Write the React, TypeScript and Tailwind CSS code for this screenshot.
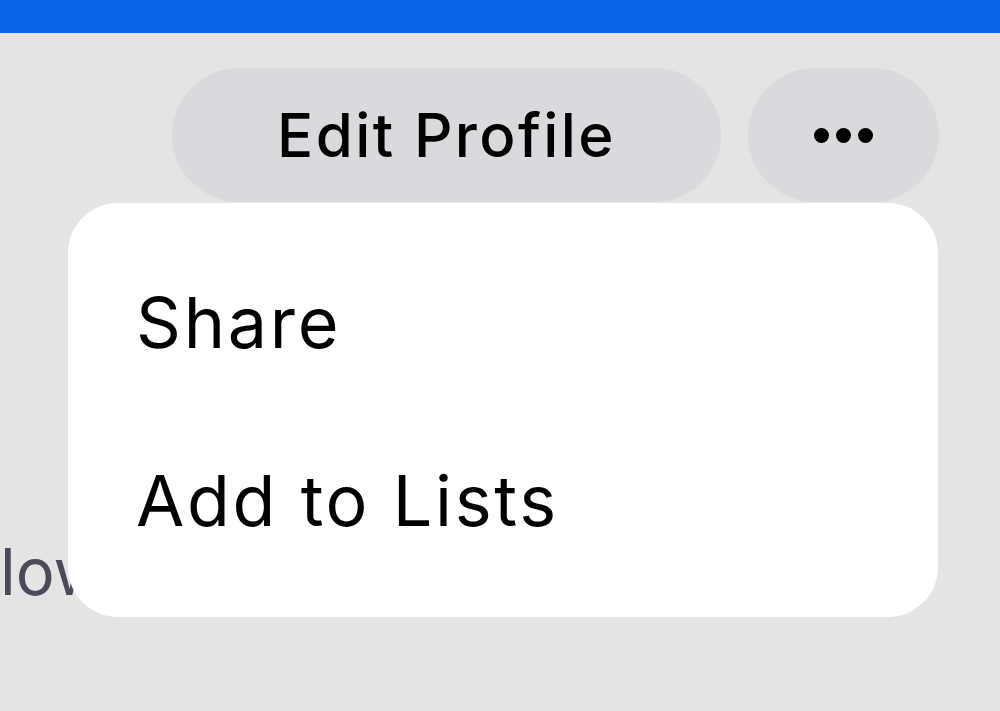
export default function App() {
    return (
        <div
            className="relative w-[1000px] h-[711px] overflow-hidden bg-[#e4e4e4]"
            style={{ fontFamily: "Inter, 'Noto Sans', sans-serif" }}
        >
            {/* Top bar */}
            <div className="h-[33px] bg-[#0866e6]" />

            {/* Action buttons */}
            <div className="flex justify-end gap-[27px] pt-[35px] pr-[61px]">
                <button className="h-[134px] w-[549px] rounded-full bg-[#d9d9de] text-[60px] font-medium tracking-[0.04em] text-black">
                    Edit Profile
                </button>
                <button className="flex h-[134px] w-[191px] items-center justify-center gap-[7px] rounded-full bg-[#d9d9de]">
                    <span className="h-[15px] w-[15px] rounded-full bg-black" />
                    <span className="h-[15px] w-[15px] rounded-full bg-black" />
                    <span className="h-[15px] w-[15px] rounded-full bg-black" />
                </button>
            </div>

            {/* Page text under the menu */}
            <div className="mt-[337px] text-[65px] leading-none text-[#4a4a5a]">
                lowers
            </div>

            {/* Dropdown menu */}
            <div className="absolute left-[68px] top-[203px] flex h-[414px] w-[870px] flex-col rounded-[50px] bg-white pl-[68px] pt-[70px]">
                <div className="text-[70px] leading-[100px] tracking-[0.039em] text-black">Share</div>
                <div className="mt-[78px] text-[70px] leading-[100px] tracking-[0.039em] text-black">Add to Lists</div>
            </div>
        </div>
    );
}
